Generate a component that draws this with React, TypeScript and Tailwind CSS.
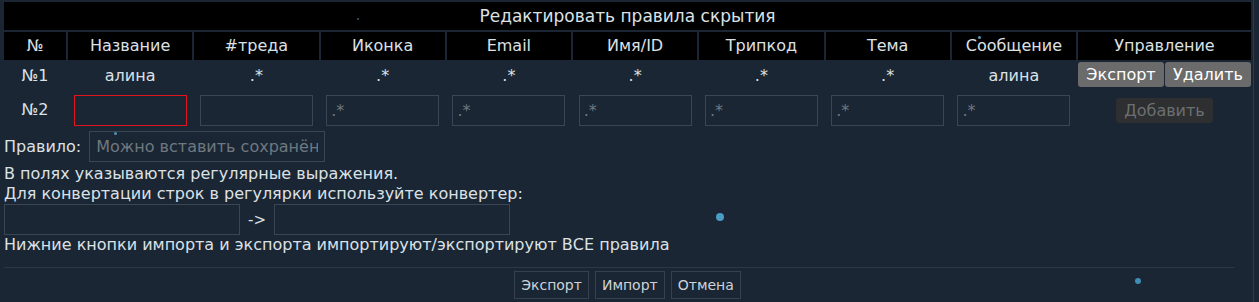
const cols = ['№', 'Название', '#треда', 'Иконка', 'Email', 'Имя/ID', 'Трипкод', 'Тема', 'Сообщение', 'Управление'];
const row1 = ['№1', 'алина', '.*', '.*', '.*', '.*', '.*', '.*', 'алина'];
const placeholders = ['', '', '.*', '.*', '.*', '.*', '.*', '.*'];

const dots = [
  { x: 357, y: 18, s: 2, c: 'bg-[#2f5f70]' },
  { x: 978, y: 36, s: 3, c: 'bg-[#5a9ab8]' },
  { x: 114, y: 132, s: 3, c: 'bg-[#4f93b5]' },
  { x: 716, y: 213, s: 8, c: 'bg-[#4a9cc4]' },
  { x: 1135, y: 278, s: 6, c: 'bg-[#3f8db5]' },
];

export default function App() {
  return (
    <div className="relative flex h-[302px] w-[1259px] overflow-hidden bg-[#1a2633] font-['DejaVu_Sans',sans-serif] text-[16px] leading-5 text-[#dce1e6]">
      <div className="flex w-[1251px] flex-col pl-1 pt-[2px]">
        <div className="flex h-7 items-center justify-center bg-black text-[17px]">Редактировать правила скрытия</div>

        <div className="mt-[2px] grid grid-cols-[62px_repeat(8,1fr)_173px] gap-x-[2px] gap-y-[2px]">
          {cols.map((c) => (
            <div key={c} className="flex h-7 items-center justify-center bg-black">
              {c}
            </div>
          ))}

          {row1.map((v, i) => (
            <div key={i} className="flex h-7 items-center justify-center">
              {v}
            </div>
          ))}
          <div className="flex h-7 items-start gap-px">
            <button className="h-[25px] flex-1 rounded-[3px] bg-[#6b6b6b] text-white">Экспорт</button>
            <button className="h-[25px] flex-1 rounded-[3px] bg-[#6b6b6b] text-white">Удалить</button>
          </div>

          <div className="flex h-[34px] items-center justify-center pt-[2px]">№2</div>
          {placeholders.map((p, i) => (
            <div key={i} className="flex h-[34px] items-start justify-center pt-[3px]">
              <input
                placeholder={p}
                className={`h-[31px] w-[113px] border bg-transparent px-1 text-[16px] outline-none placeholder:text-[#6f7880] ${
                  i === 0 ? 'border-[#e0161c]' : 'border-[#3a4654]'
                }`}
              />
            </div>
          ))}
          <div className="flex h-[34px] items-start justify-center pt-[6px]">
            <button className="h-[25px] rounded-[3px] bg-[#2d2f31] px-[8px] text-[#6c6f72]">Добавить</button>
          </div>
        </div>

        <div className="mt-[5px] flex items-center gap-2">
          <span>Правило:</span>
          <input
            placeholder="Можно вставить сохранённое правило"
            className="h-[31px] w-[236px] border border-[#3a4654] bg-transparent px-[6px] text-[16px] outline-none placeholder:text-[#6f7880]"
          />
        </div>
        <div className="mt-[2px]">В полях указываются регулярные выражения.</div>
        <div>Для конвертации строк в регулярки используйте конвертер:</div>
        <div className="flex items-center gap-2">
          <input className="h-[31px] w-[236px] border border-[#3a4654] bg-transparent outline-none" />
          <span className="text-[15px]">-&gt;</span>
          <input className="h-[31px] w-[236px] border border-[#3a4654] bg-transparent outline-none" />
        </div>
        <div>Нижние кнопки импорта и экспорта импортируют/экспортируют ВСЕ правила</div>

        <div className="mt-[12px] mr-[17px] border-t border-[#2b3846]" />
        <div className="mt-[3px] flex justify-center gap-[6px] text-[14px] text-[#cdd3d9]">
          <button className="h-7 border border-[#35414e] px-[6px]">Экспорт</button>
          <button className="h-7 border border-[#35414e] px-[6px]">Импорт</button>
          <button className="h-7 border border-[#35414e] px-[6px]">Отмена</button>
        </div>
      </div>
      <div className="ml-[2px] w-px bg-[#2d3b49]" />

      {dots.map((d, i) => (
        <span
          key={i}
          className={`absolute rounded-full ${d.c}`}
          style={{ left: d.x, top: d.y, width: d.s, height: d.s }}
        />
      ))}
    </div>
  );
}
